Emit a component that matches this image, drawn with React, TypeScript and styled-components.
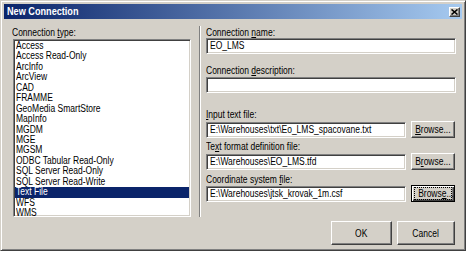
import React from 'react';
import styled, { createGlobalStyle, css } from 'styled-components';

const Global = createGlobalStyle`
  html, body { margin: 0; padding: 0; background: #ffffff; }
  body {
    font-family: "Liberation Sans", Arial, sans-serif;
    font-size: 10px;
    color: #000;
  }
  * { box-sizing: border-box; }
  u { text-decoration: underline; text-underline-offset: 1px; }
`;

/* Narrow text: the reference's Tahoma is horizontally compressed */
const T = styled.span<{ $center?: boolean }>`
  display: inline-block;
  white-space: nowrap;
  transform: scaleX(0.85);
  transform-origin: ${(p) => (p.$center ? 'center' : 'left')} center;
`;

const raised = css`
  border: 1px solid;
  border-color: #ffffff #404040 #404040 #ffffff;
  box-shadow: inset -1px -1px #808080, inset 1px 1px #d4d0c8;
`;

const sunken = css`
  border: 1px solid;
  border-color: #808080 #ffffff #ffffff #808080;
  box-shadow: inset 1px 1px #404040, inset -1px -1px #d4d0c8;
`;

const Window = styled.div`
  width: 466px;
  height: 251px;
  background: #d4d0c8;
  border: 1px solid;
  border-color: #d4d0c8 #404040 #404040 #d4d0c8;
  box-shadow: inset 1px 1px #ffffff, inset -1px -1px #808080;
  padding: 3px;
  display: flex;
  flex-direction: column;
`;

const TitleBar = styled.div`
  height: 15px;
  background: linear-gradient(to right, #0a246a, #a6caf0);
  display: flex;
  align-items: center;
  justify-content: space-between;
  padding: 0 2px 0 3px;
`;

const TitleText = styled.span`
  display: inline-block;
  color: #ffffff;
  font-weight: bold;
  font-size: 11px;
  line-height: 15px;
  white-space: nowrap;
  transform: scaleX(0.83);
  transform-origin: left center;
`;

const CloseButton = styled.div`
  width: 11px;
  height: 10px;
  background: #d4d0c8;
  ${raised};
  display: flex;
  align-items: center;
  justify-content: center;
`;

const Body = styled.div`
  flex: 1;
  display: flex;
  flex-direction: column;
  padding: 8px 6px 0 8px;
`;

const Main = styled.div`
  display: flex;
  align-items: flex-start;
`;

const LeftColumn = styled.div`
  width: 179px;
  display: flex;
  flex-direction: column;
`;

const Label = styled.div<{ $gap?: number }>`
  height: 11px;
  line-height: 11px;
  white-space: nowrap;
  margin-top: ${(p) => p.$gap ?? 0}px;
`;

const ListBox = styled.div`
  margin-top: 1px;
  margin-left: 1px;
  width: 178px;
  height: 178px;
  background: #ffffff;
  ${sunken};
  padding: 1px;
  overflow: hidden;
`;

const ListItem = styled.div<{ $selected?: boolean }>`
  height: 10.45px;
  line-height: 10.45px;
  padding-left: 1px;
  white-space: nowrap;
  background: ${(p) => (p.$selected ? '#0a246a' : 'transparent')};
  color: ${(p) => (p.$selected ? '#ffffff' : '#000000')};
`;

const Separator = styled.div`
  width: 2px;
  height: 191px;
  margin-top: -1px;
  margin-left: 8px;
  border-left: 1px solid #808080;
  border-right: 1px solid #ffffff;
`;

const RightColumn = styled.div`
  width: 250px;
  margin-left: 5px;
  display: flex;
  flex-direction: column;
`;

const TextBox = styled.div<{ $gap?: number; $w?: number }>`
  height: 16px;
  width: ${(p) => (p.$w ? `${p.$w}px` : 'auto')};
  flex: none;
  margin-top: ${(p) => p.$gap ?? 0}px;
  background: #ffffff;
  ${sunken};
  padding: 0 3px;
  line-height: 14px;
  white-space: nowrap;
  overflow: hidden;
`;

const FileRow = styled.div<{ $gap?: number }>`
  display: flex;
  align-items: center;
  gap: 5px;
  height: 17px;
  margin-top: ${(p) => p.$gap ?? 0}px;
`;

const Button = styled.div<{ $w: number; $h: number; $focused?: boolean }>`
  width: ${(p) => p.$w}px;
  height: ${(p) => p.$h}px;
  flex: none;
  background: #d4d0c8;
  display: flex;
  align-items: center;
  justify-content: center;
  line-height: 11px;
  white-space: nowrap;
  ${(p) =>
    p.$focused
      ? css`
          border: 1px solid #000000;
          box-shadow: inset 1px 1px #ffffff, inset -1px -1px #404040, inset -2px -2px #808080;
        `
      : raised};
`;

const FocusRing = styled.span`
  display: block;
  width: 36px;
  height: 11px;
  outline: 1px dotted #000000;
  text-align: center;
  line-height: 11px;
`;

const ButtonRow = styled.div`
  display: flex;
  justify-content: flex-end;
  gap: 5px;
  margin-top: 4px;
  margin-right: 1px;
`;

const items = [
  'Access',
  'Access Read-Only',
  'ArcInfo',
  'ArcView',
  'CAD',
  'FRAMME',
  'GeoMedia SmartStore',
  'MapInfo',
  'MGDM',
  'MGE',
  'MGSM',
  'ODBC Tabular Read-Only',
  'SQL Server Read-Only',
  'SQL Server Read-Write',
  'Text File',
  'WFS',
  'WMS',
];

export default function App() {
  return (
    <>
      <Global />
      <Window>
        <TitleBar>
          <TitleText>New Connection</TitleText>
          <CloseButton>
            <svg width="7" height="6" viewBox="0 0 7 6">
              <path d="M0.5 0.5 L6.5 5.5 M6.5 0.5 L0.5 5.5" stroke="#000" strokeWidth="1.6" />
            </svg>
          </CloseButton>
        </TitleBar>
        <Body>
          <Main>
            <LeftColumn>
              <Label>
                <T>
                  Connection <u>t</u>ype:
                </T>
              </Label>
              <ListBox>
                {items.map((it) => (
                  <ListItem key={it} $selected={it === 'Text File'}>
                    <T>{it}</T>
                  </ListItem>
                ))}
              </ListBox>
            </LeftColumn>
            <Separator />
            <RightColumn>
              <Label>
                <T>
                  Connection <u>n</u>ame:
                </T>
              </Label>
              <TextBox>
                <T>EO_LMS</T>
              </TextBox>
              <Label $gap={11}>
                <T>
                  Connection <u>d</u>escription:
                </T>
              </Label>
              <TextBox $gap={1} />
              <Label $gap={16}>
                <T>
                  <u>I</u>nput text file:
                </T>
              </Label>
              <FileRow $gap={1}>
                <TextBox $w={200}>
                  <T>E:\Warehouses\txt\Eo_LMS_spacovane.txt</T>
                </TextBox>
                <Button $w={44} $h={17}>
                  <T $center>
                    <u>B</u>rowse...
                  </T>
                </Button>
              </FileRow>
              <Label $gap={3}>
                <T>
                  Te<u>x</u>t format definition file:
                </T>
              </Label>
              <FileRow $gap={1}>
                <TextBox $w={200}>
                  <T>E:\Warehouses\EO_LMS.tfd</T>
                </TextBox>
                <Button $w={44} $h={17}>
                  <T $center>
                    B<u>r</u>owse...
                  </T>
                </Button>
              </FileRow>
              <Label $gap={4}>
                <T>
                  Coordinate system <u>f</u>ile:
                </T>
              </Label>
              <FileRow $gap={0}>
                <TextBox $w={200}>
                  <T>E:\Warehouses\jtsk_krovak_1m.csf</T>
                </TextBox>
                <Button $w={44} $h={17} $focused>
                  <FocusRing>
                    <T $center>
                      Brows<u>e</u>...
                    </T>
                  </FocusRing>
                </Button>
              </FileRow>
            </RightColumn>
          </Main>
          <ButtonRow>
            <Button $w={61} $h={24}>
              <T $center>OK</T>
            </Button>
            <Button $w={58} $h={24}>
              <T $center>Cancel</T>
            </Button>
          </ButtonRow>
        </Body>
      </Window>
    </>
  );
}
